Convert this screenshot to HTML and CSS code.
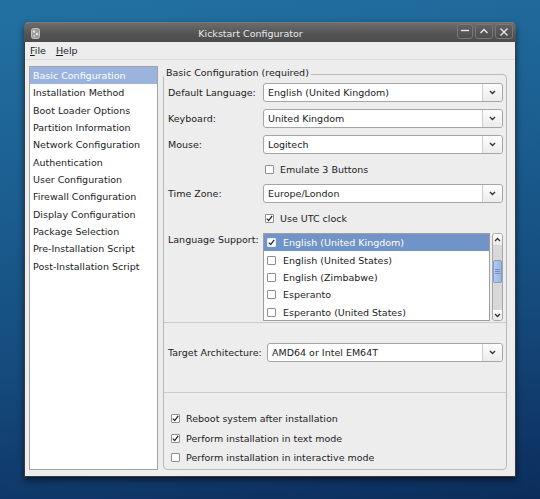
FILE: index.html
```html
<!DOCTYPE html>
<html lang="en">
<head>
    <meta charset="UTF-8">
    <title>Kickstart Configurator</title>
    <link rel="stylesheet" href="styles.css">
</head>
<body>
    <div class="window">
        <div class="titlebar">
            <div class="app-icon">
                <svg width="9" height="11" viewBox="0 0 9 11">
                    <rect x="0.5" y="0.5" width="8" height="10" rx="2" fill="#9a9a9a" stroke="#c4c4c4"/>
                    <circle cx="3" cy="3.5" r="1.3" fill="#e2e2e2"/>
                    <circle cx="6" cy="6" r="1.3" fill="#e2e2e2"/>
                    <circle cx="3.2" cy="8" r="1" fill="#d0d0d0"/>
                </svg>
            </div>
            <div class="title">Kickstart Configurator</div>
            <div class="wm-buttons">
                <div class="wm-btn min">
                    <svg width="10" height="10" viewBox="0 0 10 10"><path d="M1 3.5H9" stroke="#e8e8e8" stroke-width="1.4"/></svg>
                </div>
                <div class="wm-btn">
                    <svg width="10" height="10" viewBox="0 0 10 10"><path d="M1.5 6L5 2.5L8.5 6" stroke="#e8e8e8" stroke-width="1.4" fill="none"/></svg>
                </div>
                <div class="wm-btn">
                    <svg width="10" height="10" viewBox="0 0 10 10"><path d="M1.5 1.5L8.5 8.5M8.5 1.5L1.5 8.5" stroke="#e8e8e8" stroke-width="1.4"/></svg>
                </div>
            </div>
        </div>

        <div class="menubar">
            <span class="menu-item"><u>F</u>ile</span>
            <span class="menu-item"><u>H</u>elp</span>
        </div>

        <div class="content">
            <div class="nav">
                <div class="nav-item selected">Basic Configuration</div>
                <div class="nav-item">Installation Method</div>
                <div class="nav-item">Boot Loader Options</div>
                <div class="nav-item">Partition Information</div>
                <div class="nav-item">Network Configuration</div>
                <div class="nav-item">Authentication</div>
                <div class="nav-item">User Configuration</div>
                <div class="nav-item">Firewall Configuration</div>
                <div class="nav-item">Display Configuration</div>
                <div class="nav-item">Package Selection</div>
                <div class="nav-item">Pre-Installation Script</div>
                <div class="nav-item">Post-Installation Script</div>
            </div>

            <fieldset class="panel">
                <legend>Basic Configuration (required)</legend>

                <div class="section main">
                    <div class="row">
                        <label>Default Language:</label>
                        <div class="combo"><span class="value">English (United Kingdom)</span><span class="arrow"><svg width="7" height="5" viewBox="0 0 7 5"><path d="M1 1L3.5 3.5L6 1" stroke="#333" stroke-width="1.4" fill="none"/></svg></span></div>
                    </div>
                    <div class="row">
                        <label>Keyboard:</label>
                        <div class="combo"><span class="value">United Kingdom</span><span class="arrow"><svg width="7" height="5" viewBox="0 0 7 5"><path d="M1 1L3.5 3.5L6 1" stroke="#333" stroke-width="1.4" fill="none"/></svg></span></div>
                    </div>
                    <div class="row">
                        <label>Mouse:</label>
                        <div class="combo"><span class="value">Logitech</span><span class="arrow"><svg width="7" height="5" viewBox="0 0 7 5"><path d="M1 1L3.5 3.5L6 1" stroke="#333" stroke-width="1.4" fill="none"/></svg></span></div>
                    </div>
                    <div class="check-row indented">
                        <span class="checkbox"></span>Emulate 3 Buttons
                    </div>
                    <div class="row">
                        <label>Time Zone:</label>
                        <div class="combo"><span class="value">Europe/London</span><span class="arrow"><svg width="7" height="5" viewBox="0 0 7 5"><path d="M1 1L3.5 3.5L6 1" stroke="#333" stroke-width="1.4" fill="none"/></svg></span></div>
                    </div>
                    <div class="check-row indented">
                        <span class="checkbox checked"><svg width="7" height="7" viewBox="0 0 7 7"><path d="M0.8 3.6L2.7 5.6L6.2 0.8" stroke="#222" stroke-width="1.3" fill="none"/></svg></span>Use UTC clock
                    </div>
                    <div class="row top">
                        <label>Language Support:</label>
                        <div class="langs">
                            <div class="lang-list">
                                <div class="lang-item selected"><span class="checkbox checked"><svg width="7" height="7" viewBox="0 0 7 7"><path d="M0.8 3.6L2.7 5.6L6.2 0.8" stroke="#222" stroke-width="1.3" fill="none"/></svg></span>English (United Kingdom)</div>
                                <div class="lang-item"><span class="checkbox"></span>English (United States)</div>
                                <div class="lang-item"><span class="checkbox"></span>English (Zimbabwe)</div>
                                <div class="lang-item"><span class="checkbox"></span>Esperanto</div>
                                <div class="lang-item"><span class="checkbox"></span>Esperanto (United States)</div>
                            </div>
                            <div class="scrollbar">
                                <div class="step"><svg width="7" height="5" viewBox="0 0 7 5"><path d="M1 4L3.5 1.5L6 4" stroke="#333" stroke-width="1.3" fill="none"/></svg></div>
                                <div class="thumb"><span></span><span></span><span></span></div>
                                <div class="step down"><svg width="7" height="5" viewBox="0 0 7 5"><path d="M1 1L3.5 3.5L6 1" stroke="#333" stroke-width="1.3" fill="none"/></svg></div>
                            </div>
                        </div>
                    </div>
                </div>

                <div class="section arch">
                    <div class="row">
                        <label class="wide">Target Architecture:</label>
                        <div class="combo"><span class="value">AMD64 or Intel EM64T</span><span class="arrow"><svg width="7" height="5" viewBox="0 0 7 5"><path d="M1 1L3.5 3.5L6 1" stroke="#333" stroke-width="1.4" fill="none"/></svg></span></div>
                    </div>
                </div>

                <div class="section options">
                    <div class="check-row">
                        <span class="checkbox checked"><svg width="7" height="7" viewBox="0 0 7 7"><path d="M0.8 3.6L2.7 5.6L6.2 0.8" stroke="#222" stroke-width="1.3" fill="none"/></svg></span>Reboot system after installation
                    </div>
                    <div class="check-row">
                        <span class="checkbox checked"><svg width="7" height="7" viewBox="0 0 7 7"><path d="M0.8 3.6L2.7 5.6L6.2 0.8" stroke="#222" stroke-width="1.3" fill="none"/></svg></span>Perform installation in text mode
                    </div>
                    <div class="check-row">
                        <span class="checkbox"></span>Perform installation in interactive mode
                    </div>
                </div>
            </fieldset>
        </div>
    </div>
</body>
</html>
```

FILE: styles.css
```css
* {
    box-sizing: border-box;
}

html, body {
    height: 100%;
}

body {
    margin: 0;
    padding: 22px 0 0 24px;
    overflow: hidden;
    font-family: "DejaVu Sans", "Liberation Sans", sans-serif;
    font-size: 9.5px;
    color: #1c1c1c;
    background: linear-gradient(172deg, #2271a2 0%, #1b5e90 35%, #154b7d 65%, #0c2d5c 100%);
}

.window {
    width: 492px;
    height: 455px;
    display: flex;
    flex-direction: column;
    background: #ededed;
    border: 1px solid #3b3b3b;
    border-top: 0;
    border-radius: 5px 5px 0 0;
    box-shadow: 0 3px 6px rgba(0, 0, 0, 0.55);
}

/* title bar */
.titlebar {
    height: 20px;
    flex: none;
    display: flex;
    align-items: center;
    margin: 0 -1px;
    background: linear-gradient(#6c6c6c, #535353 60%, #4c4c4c);
    border-radius: 5px 5px 0 0;
    border-top: 1px solid #7a7a7a;
    color: #e9e9e9;
}

.app-icon {
    width: 20px;
    padding-left: 7px;
    display: flex;
    align-items: center;
    margin-top: 2px;
}

.title {
    flex: 1;
    text-align: center;
    padding-top: 1px;
}

.wm-buttons {
    display: flex;
    gap: 2px;
    padding-right: 3px;
    align-self: flex-start;
    margin-top: 1px;
}

.wm-btn {
    width: 18px;
    height: 15px;
    display: flex;
    align-items: center;
    justify-content: center;
    border: 1px solid #787878;
    border-radius: 3px;
    background: linear-gradient(#626262, #4e4e4e);
}

.wm-btn.min {
    width: 16px;
}

/* menu */
.menubar {
    height: 18px;
    flex: none;
    display: flex;
    align-items: center;
    border-bottom: 1px solid #dcdcdc;
}

.menu-item {
    padding: 0 5px;
}

/* main area */
.content {
    flex: 1;
    display: flex;
    align-items: flex-start;
    gap: 5px;
    padding: 6px 8px 6px 4px;
}

.nav {
    width: 129px;
    align-self: stretch;
    background: #fff;
    border: 1px solid #a2a2a2;
}

.nav-item {
    height: 17.35px;
    line-height: 17.35px;
    padding-left: 3px;
    white-space: nowrap;
}

.nav-item.selected {
    background: #9ab4de;
    color: #fff;
}

.panel {
    flex: 1;
    min-width: 0;
    margin: 0;
    padding: 0;
    border: 1px solid #b9b9b9;
    border-radius: 4px;
}

.panel legend {
    padding: 0 2px 2px;
    line-height: 14px;
}

.section {
    padding: 0 3px 0 4px;
}

.section.main {
    display: flex;
    flex-direction: column;
    gap: 7px;
    padding-top: 1px;
    padding-bottom: 1px;
}

.section.arch {
    border-top: 1px solid #cbcbcb;
    padding-top: 20px;
    padding-bottom: 30px;
}

.section.options {
    border-top: 1px solid #cbcbcb;
    padding-top: 16px;
    padding-bottom: 1px;
}

.row {
    display: flex;
    align-items: center;
}

.row.top {
    align-items: flex-start;
}

.row label {
    width: 95px;
    flex: none;
    line-height: 14px;
    white-space: nowrap;
}

.row label.wide {
    width: 99px;
}

.combo {
    flex: 1;
    height: 19px;
    display: flex;
    background: #fff;
    border: 1px solid #a5a5a5;
    border-radius: 3px;
}

.combo .value {
    flex: 1;
    padding-left: 4px;
    line-height: 17px;
}

.combo .arrow {
    width: 20px;
    display: flex;
    align-items: center;
    justify-content: center;
    border-left: 1px solid #cdcdcd;
    border-radius: 0 3px 3px 0;
    background: linear-gradient(#fdfdfd, #ececec);
}

.check-row {
    height: 19.5px;
    display: flex;
    align-items: center;
    gap: 6px;
    padding-left: 3px;
}

.check-row.indented {
    height: 16px;
    padding-left: 97px;
}

.checkbox {
    width: 9px;
    height: 9px;
    flex: none;
    display: inline-flex;
    align-items: center;
    justify-content: center;
    background: #fff;
    border: 1px solid #8e8e8e;
    border-radius: 1px;
}

/* language list */
.langs {
    flex: 1;
    display: flex;
    gap: 2px;
    height: 88px;
}

.lang-list {
    flex: 1;
    background: #fff;
    border: 1px solid #9e9e9e;
    overflow: hidden;
}

.lang-item {
    height: 17.4px;
    display: flex;
    align-items: center;
    gap: 7px;
    padding-left: 3px;
    white-space: nowrap;
}

.lang-item.selected {
    background: #7093c8;
    color: #fff;
}

.lang-item.selected .checkbox {
    border-color: #e8eef8;
}

.scrollbar {
    width: 11px;
    display: flex;
    flex-direction: column;
    background: #d8d8d8;
    border: 1px solid #a8a8a8;
    border-radius: 3px;
}

.step {
    height: 11px;
    display: flex;
    align-items: center;
    justify-content: center;
    background: linear-gradient(#fcfcfc, #e9e9e9);
    border-radius: 2px 2px 0 0;
}

.step.down {
    margin-top: auto;
    height: 10px;
    border-radius: 0 0 2px 2px;
}

.thumb {
    margin-top: 15px;
    height: 23px;
    display: flex;
    flex-direction: column;
    align-items: center;
    justify-content: center;
    gap: 1px;
    background: linear-gradient(90deg, #b5cbec, #9bb7e3);
    border: 1px solid #7e9ed1;
    border-radius: 2px;
}

.thumb span {
    width: 5px;
    height: 1px;
    background: #6f8fc4;
}
```
